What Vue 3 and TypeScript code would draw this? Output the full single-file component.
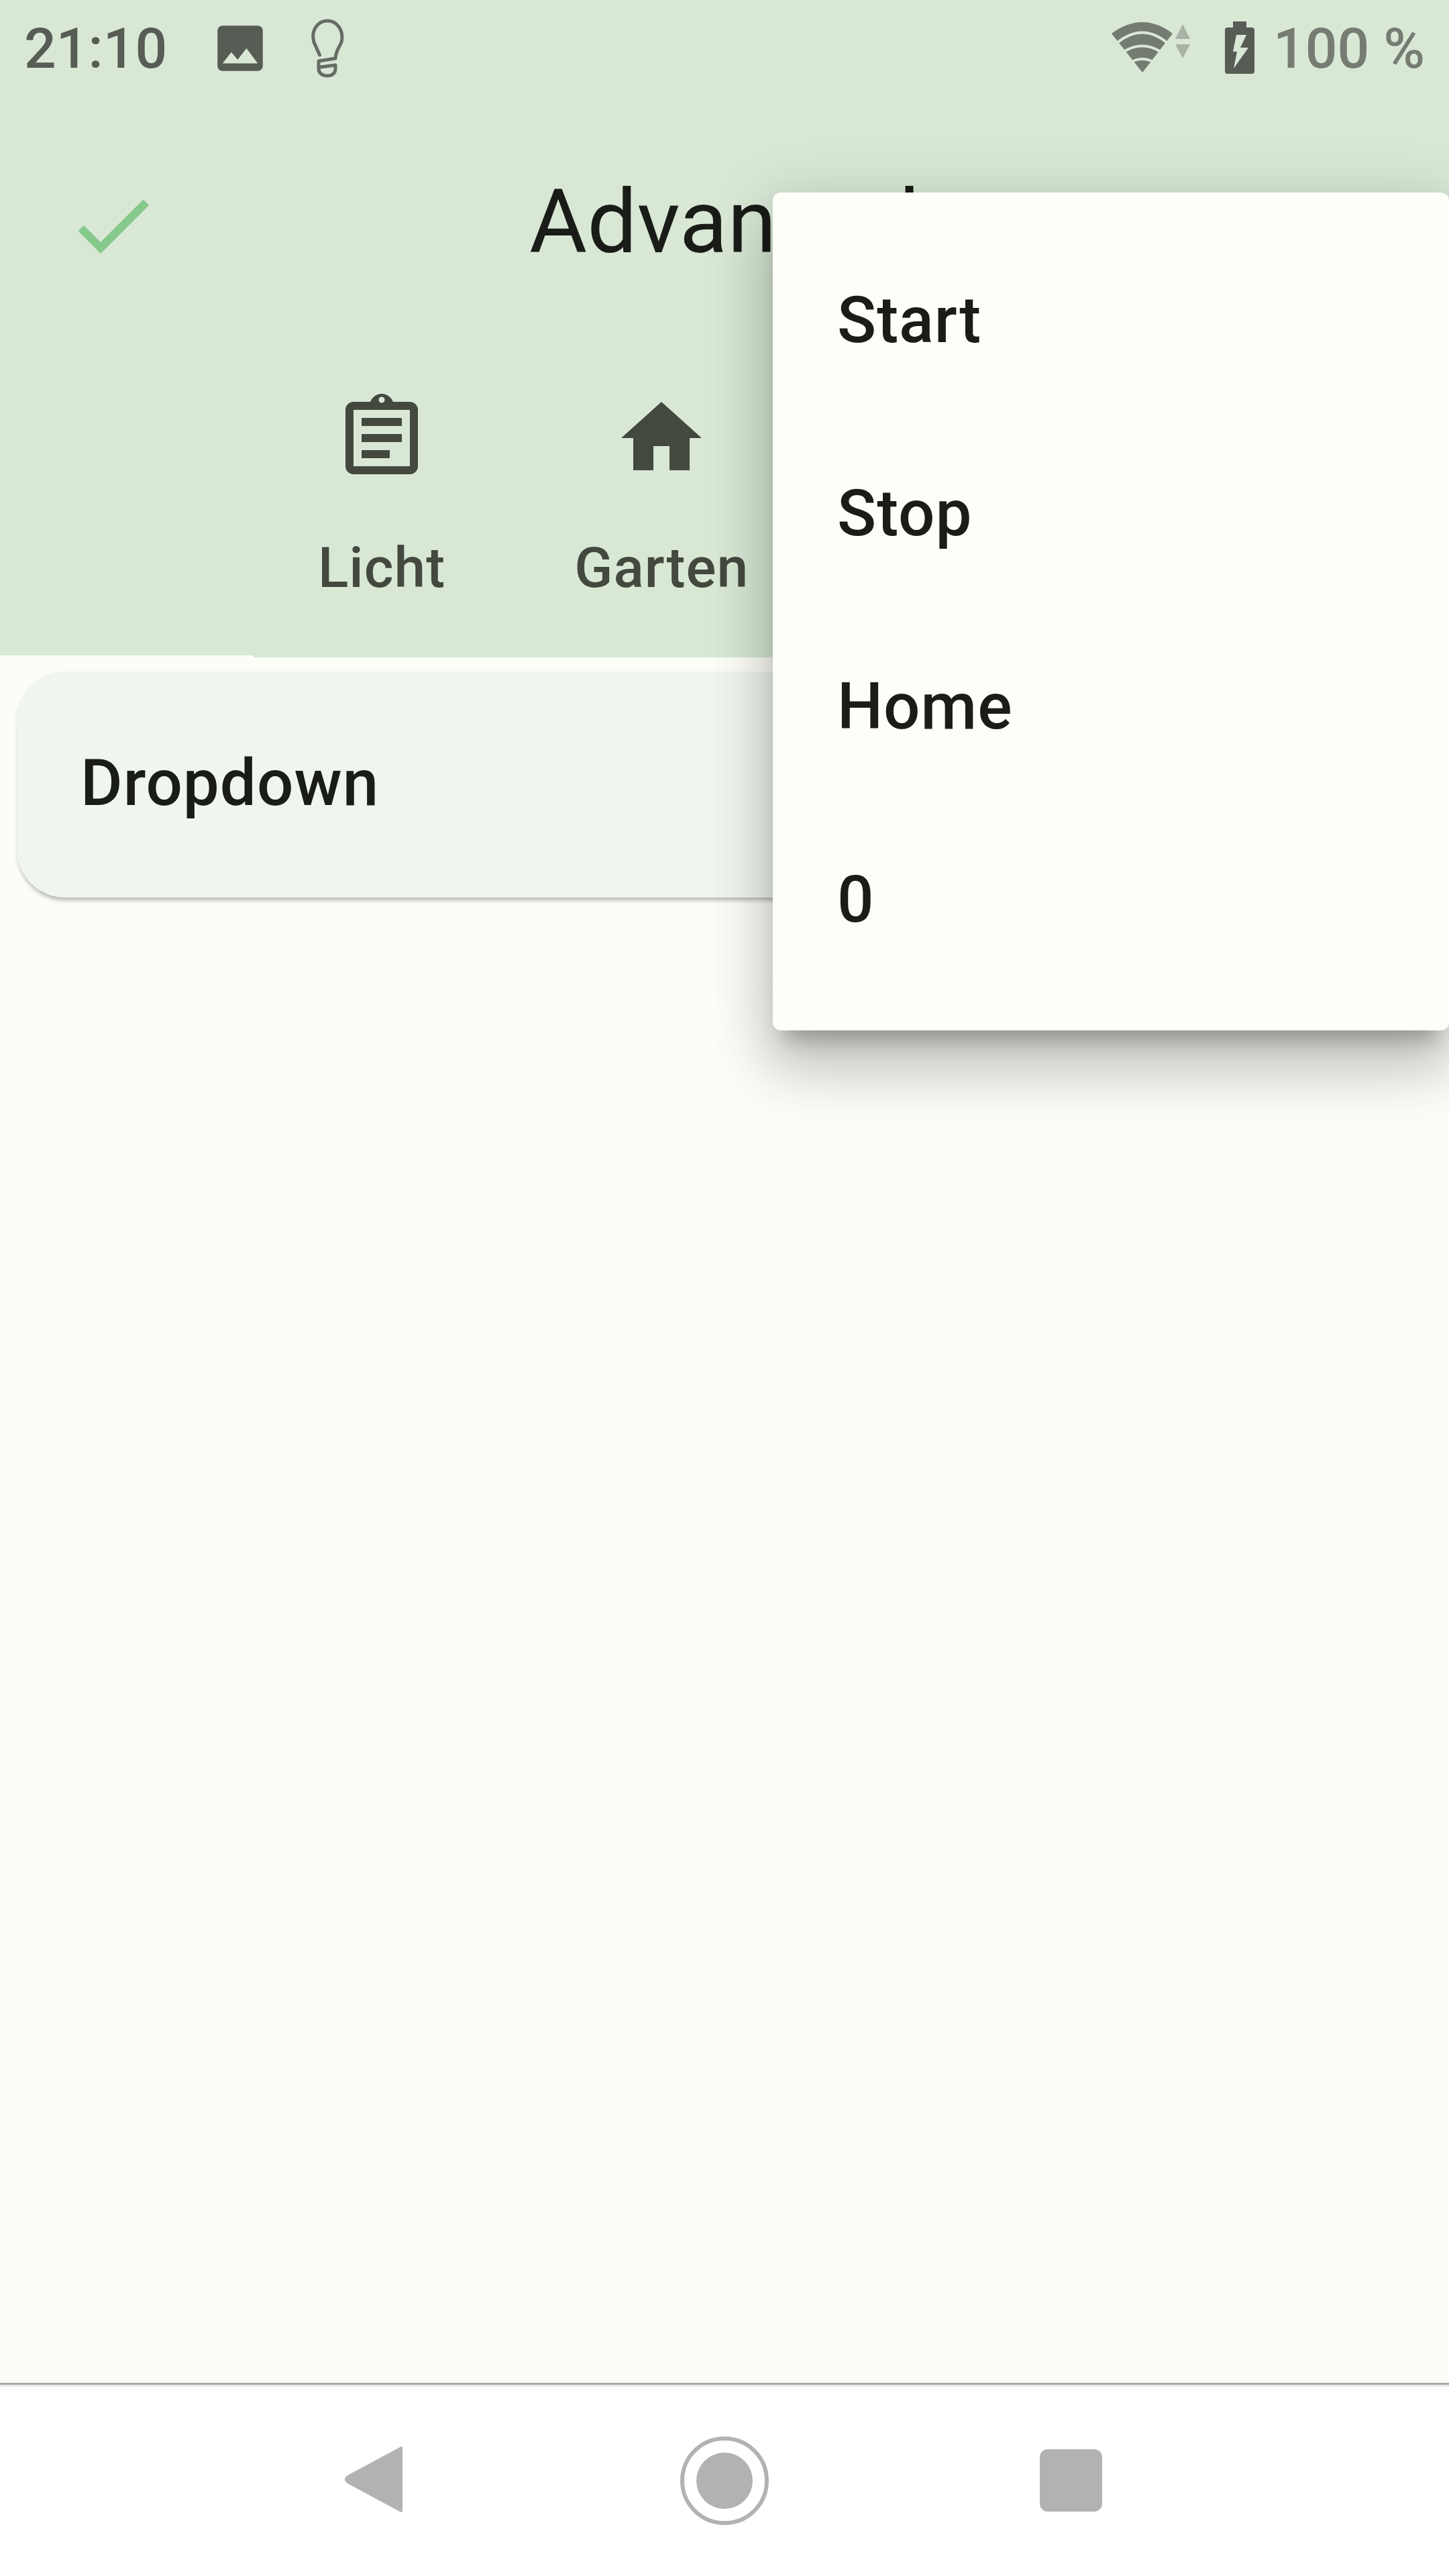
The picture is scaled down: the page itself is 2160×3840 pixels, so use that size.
<script setup lang="ts">
const tabs = [
  { label: "Licht", icon: "clipboard" },
  { label: "Garten", icon: "home" },
];
const menuItems = ["Start", "Stop", "Home", "0"];
</script>

<template>
  <div class="screen">
    <header class="appbar">
      <div class="status">
        <span class="time">21:10</span>
        <svg class="st-image" viewBox="0 0 24 24" width="90" height="90">
          <path fill-rule="evenodd" d="M21 19V5c0-1.1-.9-2-2-2H5c-1.1 0-2 .9-2 2v14c0 1.1.9 2 2 2h14c1.1 0 2-.9 2-2zM8.5 13.5l2.5 3.01L14.5 12l4.5 6H5l3.5-4.5z" />
        </svg>
        <svg class="st-bulb" viewBox="460 25 60 93" width="60" height="93">
          <path d="M478.5 82 L470 63 C465 45 476 31 490 31 C504 31 515 45 511 63 C507 71 502 78 502 87 L477 91 V103 C477 109 483 113 490 113 C497 113 502 109 502 103 V97 L480 100" />
        </svg>
        <div class="st-spacer"></div>
        <svg class="st-wifi" viewBox="1655 30 122 80" width="122" height="80">
          <path class="wedge" d="M1657 50 Q1703 16 1748 50 L1703 108 Z" />
          <path class="gap" d="M1665 64 Q1703 33 1740 64" />
          <path class="gap" d="M1675 77 Q1703 60 1730 77" />
          <path class="gap" d="M1687 92 Q1703 84 1719 92" />
          <path class="arrow" d="M1763 36 L1774 58 H1752 Z" />
          <path class="arrow" d="M1763 87 L1774 66 H1752 Z" />
        </svg>
        <svg class="st-battery" viewBox="1826 32 44 78" width="44" height="78">
          <path fill-rule="evenodd" d="M1838 32 H1858 V41 H1866 Q1870 41 1870 45 V106 Q1870 110 1866 110 H1830 Q1826 110 1826 106 V45 Q1826 41 1830 41 H1838 Z M1843 52 H1858 L1849 71 H1861 L1839 102 L1844 77 H1838 Z" />
        </svg>
        <span class="percent">100 %</span>
      </div>

      <div class="toolbar">
        <svg class="check" viewBox="0 0 24 24" width="144" height="144">
          <path d="M9 16.17 4.83 12l-1.41 1.41L9 19 21 7l-1.41-1.41z" />
        </svg>
        <h1 class="title">Advanced</h1>
        <svg class="more" viewBox="0 0 24 24" width="144" height="144">
          <path d="M12 8c1.1 0 2-.9 2-2s-.9-2-2-2-2 .9-2 2 .9 2 2 2zm0 2c-1.1 0-2 .9-2 2s.9 2 2 2 2-.9 2-2-.9-2-2-2zm0 6c-1.1 0-2 .9-2 2s.9 2 2 2 2-.9 2-2-.9-2-2-2z" />
        </svg>
      </div>

      <div class="tabbar">
        <div class="tab-gutter"></div>
        <nav class="tabs">
          <div v-for="tab in tabs" :key="tab.label" class="tab">
            <svg v-if="tab.icon === 'clipboard'" viewBox="0 0 24 24" width="144" height="144">
              <path fill-rule="evenodd" d="M19 3h-4.18C14.4 1.84 13.3 1 12 1S9.6 1.84 9.18 3H5c-1.1 0-2 .9-2 2v14c0 1.1.9 2 2 2h14c1.1 0 2-.9 2-2V5c0-1.1-.9-2-2-2zm0 16H5V5h14v14zM12 3.25a.75.75 0 1 1 0-1.5.75.75 0 0 1 0 1.5zM7 7h10v2H7zm0 4h10v2H7zm0 4h7v2H7z" />
            </svg>
            <svg v-else viewBox="0 0 24 24" width="144" height="144">
              <path d="M10 20v-6h4v6h5v-8h3L12 3 2 12h3v8z" />
            </svg>
            <span>{{ tab.label }}</span>
          </div>
        </nav>
      </div>
    </header>

    <main class="content">
      <div class="card">Dropdown</div>
    </main>

    <footer class="navbar">
      <div class="nav-item">
        <svg class="nav-back" viewBox="0 0 90 100" width="90" height="100">
          <path d="M84 2 Q88 -1 88 5 V95 Q88 101 84 98 L6 56 Q-2 50 6 44 Z" />
        </svg>
      </div>
      <div class="nav-item">
        <svg viewBox="0 0 132 132" width="132" height="132">
          <circle class="ring" cx="66" cy="66" r="63" />
          <circle cx="66" cy="66" r="42" />
        </svg>
      </div>
      <div class="nav-item">
        <div class="nav-square"></div>
      </div>
    </footer>

    <ul class="menu">
      <li v-for="item in menuItems" :key="item">{{ item }}</li>
    </ul>
  </div>
</template>

<style>
html,
body {
  margin: 0;
  background: #fcfdf6;
}
</style>

<style scoped>
.screen {
  position: relative;
  display: flex;
  flex-direction: column;
  width: 2160px;
  height: 3840px;
  overflow: hidden;
  background: #fcfdf6;
  color: #1a1c18;
  font-family: Roboto, "Liberation Sans", sans-serif;
}

.status {
  display: flex;
  align-items: flex-start;
  height: 144px;
  padding: 0 36px;
  box-sizing: border-box;
  background: #d8e8d5;
}

.time,
.percent {
  margin-top: 24px;
  font-size: 84px;
  font-weight: 500;
  line-height: 98px;
  color: #575c54;
}

.percent {
  margin-left: 28px;
  color: #767c72;
}

.st-image {
  margin: 27px 0 0 64px;
  fill: #575c54;
}

.st-bulb {
  margin: 25px 0 0 55px;
  fill: none;
  stroke: #666c63;
  stroke-width: 5;
  stroke-linecap: round;
  stroke-linejoin: round;
}

.st-spacer {
  flex: 1;
}

.st-wifi {
  margin-top: 30px;
}

.wedge {
  fill: #747b70;
}

.gap {
  fill: none;
  stroke: #d8e8d5;
  stroke-width: 4;
}

.arrow {
  fill: #a8b3a6;
}

.st-battery {
  margin: 32px 0 0 49px;
  fill: #575c54;
}

.toolbar {
  position: relative;
  display: flex;
  align-items: center;
  justify-content: space-between;
  height: 384px;
  padding: 0 72px 0 96px;
  box-sizing: border-box;
  background: #d8e8d5;
}

.check {
  fill: #85c98b;
}

.more {
  fill: #43493f;
}

.title {
  position: absolute;
  left: 0;
  right: 0;
  margin: -10px 0 0;
  text-align: center;
  font-size: 132px;
  font-weight: 400;
  line-height: 176px;
}

.tabbar {
  display: flex;
  align-items: flex-start;
}

.tab-gutter {
  width: 378px;
  height: 449px;
  background: #d8e8d5;
}

.tabs {
  flex: 1;
  display: flex;
  height: 452px;
  background: #d8e8d5;
}

.tab {
  display: flex;
  flex-direction: column;
  align-items: center;
  padding: 53px 96px 0;
  color: #43493f;
  fill: #43493f;
  font-size: 84px;
  font-weight: 500;
  letter-spacing: 1px;
  line-height: 98px;
}

.tab span {
  margin-top: 73px;
}

.content {
  flex: 1;
  padding: 21px 23px 0 25px;
}

.card {
  display: flex;
  align-items: center;
  height: 337px;
  padding: 0 0 5px 95px;
  box-sizing: border-box;
  border-radius: 72px;
  background: #f0f5ee;
  box-shadow: 0 6px 6px -2px rgba(0, 0, 0, 0.28);
  font-size: 96px;
  font-weight: 500;
  letter-spacing: 1px;
}

.navbar {
  display: flex;
  justify-content: center;
  align-items: center;
  height: 288px;
  box-sizing: border-box;
  background: #fff;
  border-top: 3px solid #aaa;
  box-shadow: inset 0 3px 0 #ebebeb;
}

.nav-item {
  display: flex;
  justify-content: center;
  align-items: center;
  width: 516px;
  fill: #b2b2b2;
}

.nav-back {
  margin: -3px 0 0 -15px;
}

.ring {
  fill: none;
  stroke: #b2b2b2;
  stroke-width: 6;
}

.nav-square {
  width: 93px;
  height: 93px;
  border-radius: 12px;
  background: #b2b2b2;
}

.menu {
  position: absolute;
  top: 287px;
  left: 1152px;
  right: 0;
  height: 1249px;
  margin: 0;
  padding: 46px 0 0;
  box-sizing: border-box;
  list-style: none;
  border-radius: 12px;
  background: #fdfef7;
  box-shadow:
    0 30px 30px -18px rgba(0, 0, 0, 0.26),
    0 60px 84px 6px rgba(0, 0, 0, 0.16),
    0 18px 96px 12px rgba(0, 0, 0, 0.12);
}

.menu li {
  display: flex;
  align-items: center;
  height: 288px;
  padding-left: 96px;
  font-size: 96px;
  font-weight: 500;
  letter-spacing: 1px;
}
</style>
